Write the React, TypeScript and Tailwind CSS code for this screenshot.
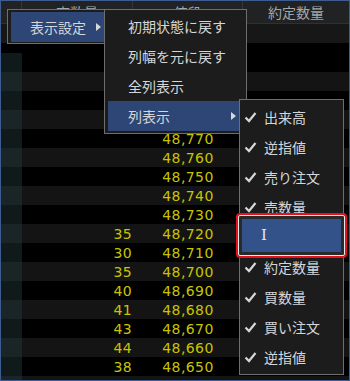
import React from "react";

const jp = { fontFamily: '"Noto Sans CJK JP", "Noto Sans", sans-serif' };
const num = { fontFamily: '"DejaVu Sans", "Liberation Sans", sans-serif' };

// the top four rows sit under the open menus, so their prices are left blank
const rows: { price?: string; qty?: string }[] = [
  {},
  {},
  {},
  {},
  { price: "48,770" },
  { price: "48,760" },
  { price: "48,750" },
  { price: "48,740" },
  { price: "48,730" },
  { price: "48,720", qty: "35" },
  { price: "48,710", qty: "30" },
  { price: "48,700", qty: "35" },
  { price: "48,690", qty: "40" },
  { price: "48,680", qty: "41" },
  { price: "48,670", qty: "43" },
  { price: "48,660", qty: "44" },
  { price: "48,650", qty: "38" },
  { price: "48,640", qty: "34" },
];

const subItems = ["初期状態に戻す", "列幅を元に戻す", "全列表示"];

const columnItems = ["出来高", "逆指値", "売り注文", "売数量", "", "約定数量", "買数量", "買い注文", "逆指値"];

const Check = () => (
  <svg width="13" height="12" viewBox="0 0 13 12" className="shrink-0">
    <path d="M1.5 6.5 L5 10 L11.5 2" fill="none" stroke="#d6d6d6" strokeWidth="2.2" />
  </svg>
);

const Arrow = () => (
  <svg width="5" height="8" viewBox="0 0 5 8">
    <path d="M0 0 L5 4 L0 8 Z" fill="#d8d8d8" />
  </svg>
);

export default function App ()
{
  return (
    <div className="relative w-[350px] h-[381px] overflow-hidden border border-[#3d5c92] bg-black">
      {/* header */}
      <div className="grid grid-cols-[21px_111px_110px_106px] h-[23px] bg-[#202224] border-b border-[#2e3033] text-[14px] text-[#a3a6aa]" style={jp}>
        <div className="border-r border-[#34373a]" />
        <div className="flex items-center justify-center border-r border-[#34373a]">売数量</div>
        <div className="flex items-center justify-center border-r border-[#34373a]">値段</div>
        <div className="flex items-center justify-center">約定数量</div>
      </div>

      {/* first row + gap */}
      <div className="h-[19px] bg-[#171717]" />
      <div className="h-[10px] bg-black" />

      {rows.map( ( r, idx ) =>
      {
        const odd = idx % 2 === 1;
        return (
          <div
            key={idx}
            className={`grid grid-cols-[21px_111px_110px_106px] h-[19px] text-[14px] tracking-[0.4px] text-[#c9c400] ${odd ? "bg-[#141414]" : "bg-black"}`}
            style={num}
          >
            <div className={odd ? "bg-[#1a2528]" : "bg-[#101a1b]"} />
            <div className="flex items-center justify-end pr-[1px] leading-none">{r.qty}</div>
            <div className="flex items-center justify-center leading-none">{r.price}</div>
            <div />
          </div>
        );
      } )}

      {/* menu 1 */}
      <div className="absolute left-[6px] top-[8px] w-[100px] h-[35px] border border-[#6e6e6e] bg-[#1c1c1c] pt-[2px] pb-[1px] pl-[3px] pr-[1px] z-10" style={jp}>
        <div className="flex h-full items-center bg-[#2d4676] pl-[19px] pr-[4px] text-[14px] text-[#d4d6da]">
          <span className="flex-1">表示設定</span>
          <Arrow />
        </div>
      </div>

      {/* menu 2 */}
      <div className="absolute left-[103px] top-[8px] w-[143px] border border-[#6e6e6e] bg-[#1c1c1c] pt-[1px] pb-[2px] pl-[3px] pr-[3px] z-20" style={jp}>
        {subItems.map( ( t, idx ) => (
          <div key={idx} className="flex h-[30px] items-center pl-[20px] text-[14px] text-[#d4d6da]">
            {t}
          </div>
        ) )}
        <div className="flex h-[30px] items-center bg-[#2d4676] pl-[20px] pr-[7px] text-[14px] text-[#d4d6da]">
          <span className="flex-1">列表示</span>
          <Arrow />
        </div>
      </div>

      {/* menu 3 */}
      <div className="absolute left-[238px] top-[98px] w-[105px] border border-[#6e6e6e] bg-[#1c1c1c] pt-[2px] pb-[2px] z-30" style={jp}>
        {columnItems.map( ( t, idx ) => (
          <div key={idx} className="flex h-[30px] items-center gap-[7px] pl-[4px] text-[14px] text-[#d4d6da]">
            {t && <Check />}
            <span>{t}</span>
          </div>
        ) )}
      </div>

      {/* highlighted item */}
      <div className="absolute left-[235px] top-[212px] w-[111px] h-[45px] rounded-[4px] border-[2.5px] border-[#e3121c] bg-[#e3121c] z-40">
        <div className="h-full w-full rounded-[2px] border border-[#e8e8e8] bg-[#2a2a2a] p-[3px]">
          <div className="flex h-full items-center bg-[#34528a] pl-[19px] text-[15px] text-[#e4e6ea]" style={{ fontFamily: '"DejaVu Serif", "Liberation Serif", serif' }}>
            I
          </div>
        </div>
      </div>
    </div>
  );
}
